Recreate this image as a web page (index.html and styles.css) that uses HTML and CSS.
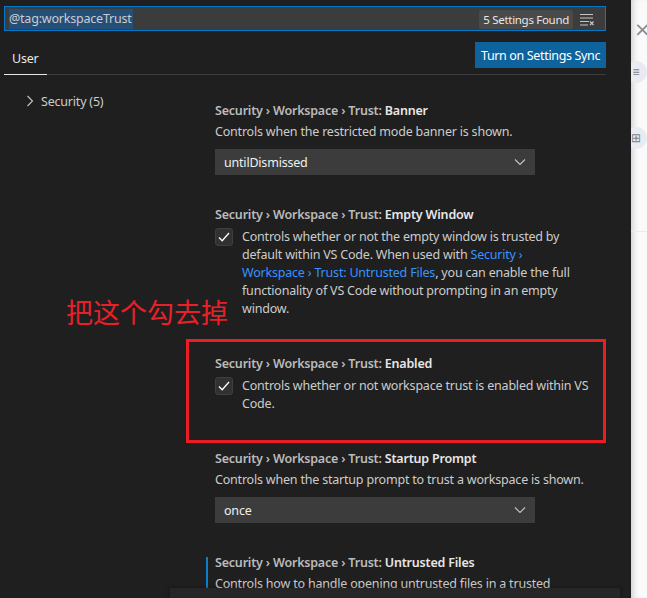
FILE: index.html
```html
<!DOCTYPE html>
<html lang="en">
<head>
<meta charset="utf-8">
<title>Settings</title>
<link rel="stylesheet" href="styles.css">
</head>
<body>
<div class="app">
  <div class="editor">
    <div class="search">
      <span class="query"><span class="sel">@tag:workspaceTrust</span></span>
      <span class="count">5 Settings Found</span>
      <svg class="clear" width="16" height="14" viewBox="0 0 16 14"><path d="M1 2.5h13M1 6h13M1 9.5h9M1 13h8" stroke="#c5c5c5" stroke-width="1" fill="none"/><path d="M11 9.5l3.5 3.5M14.5 9.5L11 13" stroke="#c5c5c5" stroke-width="1.2" fill="none"/></svg>
    </div>
    <div class="tabbar">
      <div class="tab">User</div>
      <button class="sync">Turn on Settings Sync</button>
    </div>
    <div class="body">
      <nav class="tree">
        <div class="node"><svg width="8" height="12" viewBox="0 0 8 12"><path d="M1.5 1l5 5-5 5" stroke="#c5c5c5" stroke-width="1.1" fill="none"/></svg><span>Security (5)</span></div>
      </nav>
      <div class="list">
        <div class="setting">
          <div class="title"><span class="cat">Security › Workspace › Trust: </span><span class="label">Banner</span></div>
          <div class="desc">Controls when the restricted mode banner is shown.</div>
          <div class="select"><span>untilDismissed</span><svg width="12" height="8" viewBox="0 0 12 8"><path d="M1 1.5l5 5 5-5" stroke="#c5c5c5" stroke-width="1.1" fill="none"/></svg></div>
        </div>
        <div class="setting">
          <div class="title"><span class="cat">Security › Workspace › Trust: </span><span class="label">Empty Window</span></div>
          <div class="check-row">
            <span class="checkbox"><svg width="14" height="14" viewBox="0 0 14 14"><path d="M2 7.5l3.2 3.2L12 3" stroke="#ffffff" stroke-width="1.3" fill="none"/></svg></span>
            <div class="desc-c">Controls whether or not the empty window is trusted by default within VS Code. When used with <span class="link">Security ›<br>Workspace › Trust: Untrusted Files</span>, you can enable the full functionality of VS Code without prompting in an empty window.</div>
          </div>
        </div>
        <div class="setting">
          <div class="title"><span class="cat">Security › Workspace › Trust: </span><span class="label">Enabled</span></div>
          <div class="check-row">
            <span class="checkbox"><svg width="14" height="14" viewBox="0 0 14 14"><path d="M2 7.5l3.2 3.2L12 3" stroke="#ffffff" stroke-width="1.3" fill="none"/></svg></span>
            <div class="desc-c">Controls whether or not workspace trust is enabled within VS Code.</div>
          </div>
        </div>
        <div class="setting">
          <div class="title"><span class="cat">Security › Workspace › Trust: </span><span class="label">Startup Prompt</span></div>
          <div class="desc">Controls when the startup prompt to trust a workspace is shown.</div>
          <div class="select"><span>once</span><svg width="12" height="8" viewBox="0 0 12 8"><path d="M1 1.5l5 5 5-5" stroke="#c5c5c5" stroke-width="1.1" fill="none"/></svg></div>
        </div>
        <div class="setting focused">
          <div class="title"><span class="cat">Security › Workspace › Trust: </span><span class="label">Untrusted Files</span></div>
          <div class="desc">Controls how to handle opening untrusted files in a trusted workspace.</div>
        </div>
      </div>
    </div>
    <div class="annot-text">把这个勾去掉</div>
    <div class="annot-box"></div>
    <div class="bottom-widget"></div>
  </div>
  <div class="side">
    <div class="side-close">×</div>
    <div class="side-btn">≡</div>
    <div class="side-btn">⊞</div>
    <div class="side-rule"></div>
  </div>
</div>
</body>
</html>
```
FILE: styles.css
```css
* { box-sizing: border-box; }
html, body { margin: 0; padding: 0; }
body {
  background: #1f1f1f;
  font-family: "Noto Sans", "Open Sans", sans-serif;
  font-size: 12.5px;
  letter-spacing: -0.2px;
  color: #cccccc;
  width: 647px;
  height: 598px;
  overflow: hidden;
}
.app { display: flex; height: 598px; }
.editor {
  position: relative;
  width: 631px;
  flex: none;
  background: #1f1f1f;
  overflow: hidden;
}
.search {
  margin: 6px 25px 0 4px;
  height: 25px;
  border: 1px solid #007acc;
  background: #3c3c3c;
  display: flex;
  align-items: center;
  padding: 1px 10px 0 4px;
}
.query { flex: 1; }
.sel {
  display: inline-block;
  background: #264f78;
  color: #cccccc;
  line-height: 20px;
  padding-right: 1px;
}
.count {
  background: #4a4a4a;
  color: #e8e8e8;
  font-size: 11.5px;
  letter-spacing: -0.3px;
  height: 19px;
  line-height: 19px;
  padding: 0 4px;
  border-radius: 2px;
  margin-right: 6px;
}
.clear { display: block; }
.tabbar {
  margin: 11px 25px 0 4px;
  height: 33px;
  display: flex;
  justify-content: space-between;
  align-items: flex-start;
  border-bottom: 1px solid #3c3c3c;
}
.tab {
  height: 33px;
  margin-bottom: -1px;
  padding: 0 8px;
  line-height: 33px;
  color: #e7e7e7;
  border-bottom: 1px solid #e7e7e7;
}
.sync {
  height: 26px;
  width: 131px;
  padding: 0;
  border: none;
  background: #0e639c;
  color: #ffffff;
  font: inherit;
  letter-spacing: -0.35px;
  white-space: nowrap;
}
.body { display: flex; }
.tree { width: 206px; flex: none; padding-top: 15px; }
.node {
  height: 22px;
  display: flex;
  align-items: center;
  padding-left: 26px;
  gap: 7px;
}
.node svg { display: block; }
.list { width: 392px; padding-top: 15px; }
.setting {
  position: relative;
  padding: 12px 0 18px 9px;
}
.setting.focused::before {
  content: "";
  position: absolute;
  left: 0;
  top: 15px;
  bottom: 0;
  width: 2px;
  background: #0a7fd0;
}
.title { line-height: 18px; font-weight: 600; white-space: nowrap; }
.cat { color: #bbbbbb; }
.label { color: #e7e7e7; }
.desc { margin-top: 3px; line-height: 18px; }
.select {
  margin-top: 8px;
  margin-bottom: 1px;
  width: 320px;
  height: 26px;
  background: #3c3c3c;
  color: #f0f0f0;
  display: flex;
  align-items: center;
  justify-content: space-between;
  padding: 0 9px 0 9px;
}
.select svg { display: block; }
.check-row {
  margin-top: 4px;
  margin-bottom: 7px;
  display: flex;
  gap: 9px;
  align-items: flex-start;
}
.checkbox {
  flex: none;
  width: 18px;
  height: 18px;
  background: #313131;
  border: 1px solid #3f3f3f;
  border-radius: 3px;
  display: flex;
  align-items: center;
  justify-content: center;
}
.checkbox svg { display: block; }
.desc-c { line-height: 18px; width: 350px; }
.link { color: #3794ff; }
.annot-text {
  position: absolute;
  left: 66px;
  top: 295px;
  font-family: "Noto Sans CJK SC", sans-serif;
  font-size: 27px;
  letter-spacing: 0;
  line-height: 34px;
  color: #e8202a;
}
.annot-box {
  position: absolute;
  left: 186px;
  top: 339px;
  width: 420px;
  height: 104px;
  border: 3px solid #ec1c24;
}
.bottom-widget {
  position: absolute;
  left: 170px;
  top: 588px;
  width: 450px;
  height: 20px;
  background: #262626;
  box-shadow: 0 0 4px rgba(0,0,0,0.4);
}
.side {
  flex: 1;
  background: #fafafa;
  box-shadow: inset 6px 0 6px -4px rgba(0,0,0,0.18);
  overflow: hidden;
  display: flex;
  flex-direction: column;
  align-items: flex-start;
}
.side-close {
  margin: 17px 0 0 3px;
  font-family: "DejaVu Sans", sans-serif;
  font-size: 20px;
  line-height: 24px;
  color: #8a8a8a;
}
.side-btn {
  margin: 20px 0 0 -6px;
  width: 22px;
  height: 22px;
  border-radius: 50%;
  background: #e9ebf0;
  color: #7a7e8a;
  font-size: 12px;
  line-height: 22px;
  text-align: center;
  flex: none;
}
.side-btn + .side-btn { margin-top: 44px; }
.side-rule {
  margin-top: 82px;
  width: 100%;
  height: 1px;
  background: #ececec;
}
```
